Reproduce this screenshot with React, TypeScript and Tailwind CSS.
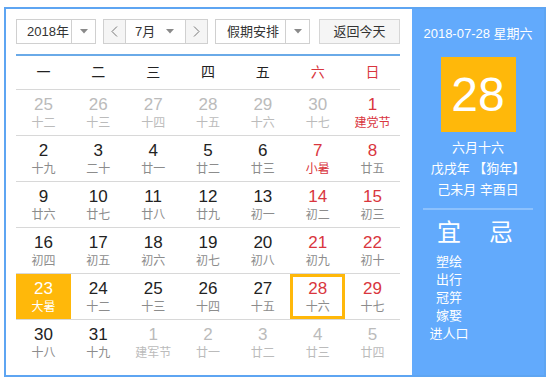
import React from "react";

type Day = { d: number; l: string; out?: boolean; fest?: boolean };

const weeks: Day[][] = [
  [
    { d: 25, l: "十二", out: true },
    { d: 26, l: "十三", out: true },
    { d: 27, l: "十四", out: true },
    { d: 28, l: "十五", out: true },
    { d: 29, l: "十六", out: true },
    { d: 30, l: "十七", out: true },
    { d: 1, l: "建党节", fest: true },
  ],
  [
    { d: 2, l: "十九" },
    { d: 3, l: "二十" },
    { d: 4, l: "廿一" },
    { d: 5, l: "廿二" },
    { d: 6, l: "廿三" },
    { d: 7, l: "小暑", fest: true },
    { d: 8, l: "廿五" },
  ],
  [
    { d: 9, l: "廿六" },
    { d: 10, l: "廿七" },
    { d: 11, l: "廿八" },
    { d: 12, l: "廿九" },
    { d: 13, l: "初一" },
    { d: 14, l: "初二" },
    { d: 15, l: "初三" },
  ],
  [
    { d: 16, l: "初四" },
    { d: 17, l: "初五" },
    { d: 18, l: "初六" },
    { d: 19, l: "初七" },
    { d: 20, l: "初八" },
    { d: 21, l: "初九" },
    { d: 22, l: "初十" },
  ],
  [
    { d: 23, l: "大暑" },
    { d: 24, l: "十二" },
    { d: 25, l: "十三" },
    { d: 26, l: "十四" },
    { d: 27, l: "十五" },
    { d: 28, l: "十六" },
    { d: 29, l: "十七" },
  ],
  [
    { d: 30, l: "十八" },
    { d: 31, l: "十九" },
    { d: 1, l: "建军节", out: true },
    { d: 2, l: "廿一", out: true },
    { d: 3, l: "廿二", out: true },
    { d: 4, l: "廿三", out: true },
    { d: 5, l: "廿四", out: true },
  ],
];

const weekdays = ["一", "二", "三", "四", "五", "六", "日"];
const yi = ["塑绘", "出行", "冠笄", "嫁娶", "进人口"];

function Caret() {
  return (
    <svg width="8" height="5" viewBox="0 0 8 5">
      <path d="M0 0 L8 0 L4 4.5 Z" fill="#8a8a8a" />
    </svg>
  );
}

function Chevron({ dir }: { dir: "left" | "right" }) {
  return (
    <svg width="7" height="11" viewBox="0 0 7 11">
      <polyline
        points={dir === "left" ? "6,0.5 1,5.5 6,10.5" : "1,0.5 6,5.5 1,10.5"}
        fill="none"
        stroke="#777"
        strokeWidth="1"
      />
    </svg>
  );
}

function DayCell({ day, col, today, selected }: { day: Day; col: number; today: boolean; selected: boolean }) {
  const weekend = col >= 5;
  let numColor = "text-[#222]";
  let lunColor = "text-[#8c8c8c]";
  if (day.out) {
    numColor = "text-[#bbb]";
    lunColor = "text-[#bbb]";
  } else if (weekend) {
    numColor = "text-[#d9363e]";
  }
  if (!day.out && day.fest) lunColor = "text-[#d9363e]";
  if (today) {
    numColor = "text-white";
    lunColor = "text-white";
  }
  return (
    <div
      className={`flex h-[45px] flex-col items-center pt-[5px] ${today ? "bg-[#ffb80a]" : ""} ${
        selected ? "ring-[3px] ring-inset ring-[#ffb80a]" : ""
      }`}
    >
      <span className={`text-[17px] leading-[20px] ${numColor}`}>{day.d}</span>
      <span className={`text-[12px] leading-[16px] ${lunColor}`}>{day.l}</span>
    </div>
  );
}

export default function App() {
  return (
    <div
      className="h-[383px] w-[549px] bg-white pl-[4px] pt-[7px]"
      style={{ fontFamily: '"Liberation Sans", Arial, "Noto Sans CJK SC", sans-serif' }}
    >
      <div className="flex h-[370px] w-[542px] border-2 border-[#5ea5f2]">
        {/* Calendar */}
        <div className="w-[406px] pl-[10px] pt-[10px]">
          <div className="flex h-[25px] items-stretch text-[13px] text-[#333]">
            <div className="flex w-[80px] border border-[#d0d0d0] bg-white">
              <span className="flex flex-1 items-center pl-[10px]">2018年</span>
              <span className="flex w-[24px] items-center justify-center border-l border-[#d0d0d0]">
                <Caret />
              </span>
            </div>
            <div className="ml-[7px] flex w-[105px] border border-[#d0d0d0] bg-white">
              <span className="flex w-[22px] items-center justify-center border-r border-[#d0d0d0] bg-[#f5f5f5]">
                <Chevron dir="left" />
              </span>
              <span className="flex flex-1 items-center gap-[11px] pl-[9px]">
                7月
                <Caret />
              </span>
              <span className="flex w-[22px] items-center justify-center border-l border-[#d0d0d0] bg-[#f5f5f5]">
                <Chevron dir="right" />
              </span>
            </div>
            <div className="ml-[7px] flex w-[95px] border border-[#d0d0d0] bg-white">
              <span className="flex flex-1 items-center pl-[11px]">假期安排</span>
              <span className="flex w-[24px] items-center justify-center border-l border-[#d0d0d0]">
                <Caret />
              </span>
            </div>
            <div className="ml-[9px] flex w-[81px] items-center justify-center border border-[#d6d6d6] bg-[#f5f5f5]">
              返回今天
            </div>
          </div>

          <div className="mt-[10px] w-[384px] border-t-2 border-[#6aaae8]">
            <div className="grid h-[33px] grid-cols-7 items-center text-[14px]">
              {weekdays.map((w, i) => (
                <span key={w} className={`text-center ${i >= 5 ? "text-[#d9363e]" : "text-[#222]"}`}>
                  {w}
                </span>
              ))}
            </div>
            {weeks.map((week, r) => (
              <div key={r} className="grid grid-cols-7 border-t border-[#d8d8d8]">
                {week.map((day, c) => (
                  <DayCell
                    key={c}
                    day={day}
                    col={c}
                    today={r === 4 && c === 0}
                    selected={r === 4 && c === 5}
                  />
                ))}
              </div>
            ))}
          </div>
        </div>

        {/* Side panel */}
        <div className="flex flex-1 flex-col items-center bg-[#62aafc] text-white">
          <div className="mt-[16px] text-[13px] leading-[18px]">2018-07-28 星期六</div>
          <div className="mt-[14px] flex h-[75px] w-[75px] items-center justify-center bg-[#ffb80a] text-[48px] leading-none">
            28
          </div>
          <div className="mt-[5px] flex flex-col items-center text-[13px] leading-[21px]">
            <span>六月十六</span>
            <span>戊戌年 【狗年】</span>
            <span>己未月 辛酉日</span>
          </div>
          <div className="mt-[8px] h-[2px] w-[110px] bg-[#8cc1fd]" />
          <div className="mt-[9px] grid w-[104px] -translate-x-[3px] grid-cols-2">
            <div className="flex flex-col items-center">
              <span className="text-[24px] leading-[28px]">宜</span>
              <div className="mt-[6px] flex flex-col items-center text-[13px] leading-[18px]">
                {yi.map((t) => (
                  <span key={t}>{t}</span>
                ))}
              </div>
            </div>
            <div className="flex flex-col items-center">
              <span className="text-[24px] leading-[28px]">忌</span>
            </div>
          </div>
        </div>
      </div>
    </div>
  );
}
